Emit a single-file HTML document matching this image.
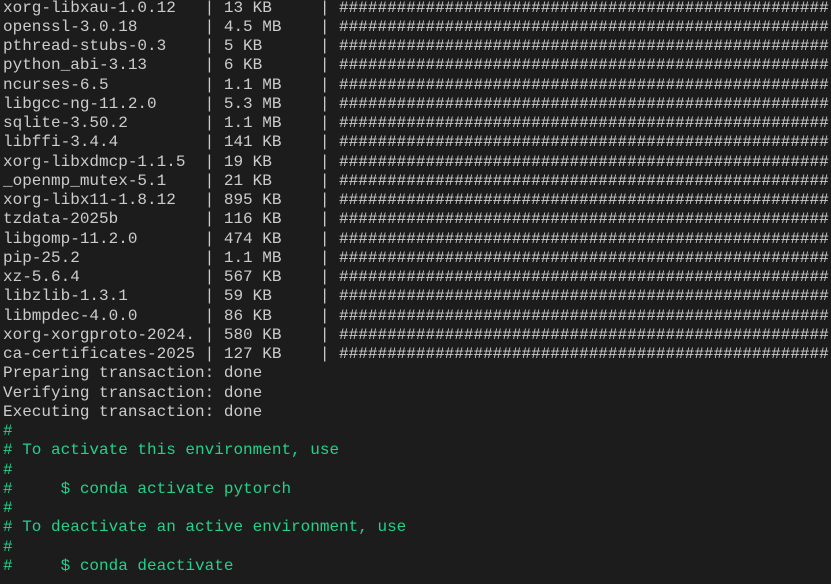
<!DOCTYPE html>
<html><head><meta charset="utf-8"><style>
html,body{margin:0;padding:0;background:#1c1c1c;width:831px;height:584px;overflow:hidden}
pre{position:absolute;left:3px;top:-1.5px;width:826px;overflow:hidden;margin:0;font-family:"Liberation Mono",monospace;font-size:16px;line-height:19.25px;color:#cccccc;white-space:pre}
.g{color:#23d18b}
</style></head><body><pre>xorg-libxau-1.0.12   | 13 KB     | ############################################################
openssl-3.0.18       | 4.5 MB    | ############################################################
pthread-stubs-0.3    | 5 KB      | ############################################################
python_abi-3.13      | 6 KB      | ############################################################
ncurses-6.5          | 1.1 MB    | ############################################################
libgcc-ng-11.2.0     | 5.3 MB    | ############################################################
sqlite-3.50.2        | 1.1 MB    | ############################################################
libffi-3.4.4         | 141 KB    | ############################################################
xorg-libxdmcp-1.1.5  | 19 KB     | ############################################################
_openmp_mutex-5.1    | 21 KB     | ############################################################
xorg-libx11-1.8.12   | 895 KB    | ############################################################
tzdata-2025b         | 116 KB    | ############################################################
libgomp-11.2.0       | 474 KB    | ############################################################
pip-25.2             | 1.1 MB    | ############################################################
xz-5.6.4             | 567 KB    | ############################################################
libzlib-1.3.1        | 59 KB     | ############################################################
libmpdec-4.0.0       | 86 KB     | ############################################################
xorg-xorgproto-2024. | 580 KB    | ############################################################
ca-certificates-2025 | 127 KB    | ############################################################
Preparing transaction: done
Verifying transaction: done
Executing transaction: done
<span class="g">#
# To activate this environment, use
#
#     $ conda activate pytorch
#
# To deactivate an active environment, use
#
#     $ conda deactivate</span></pre></body></html>
